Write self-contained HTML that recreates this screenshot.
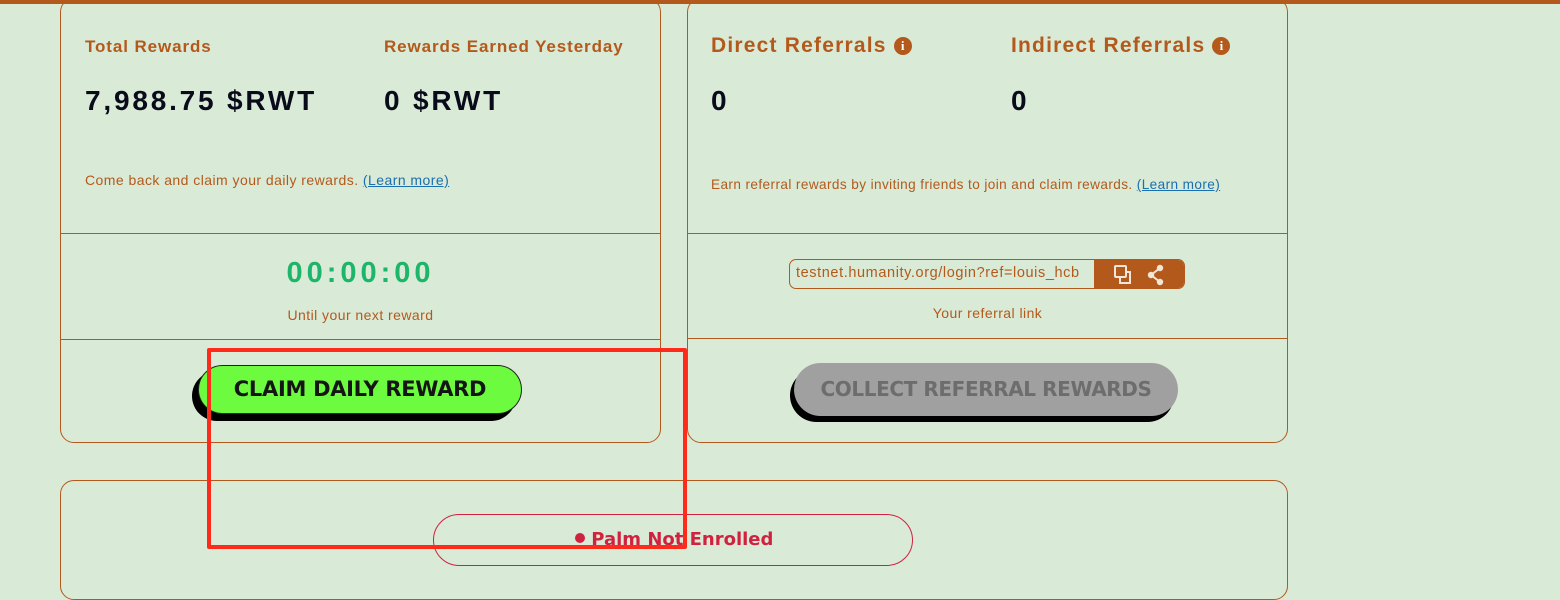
<!DOCTYPE html>
<html><head><meta charset="utf-8"><style>
*{margin:0;padding:0;box-sizing:border-box}
body{width:1560px;height:574px;background:#d9ead6;position:relative;overflow:hidden;font-family:"Liberation Sans",sans-serif}
.a{position:absolute;white-space:nowrap}
.card{position:absolute;border:1px solid #b4591c;border-radius:14px}
.hl{position:absolute;height:1px;background:#b4591c}
.lab{color:#b4591c;font-weight:bold;font-size:17px;letter-spacing:0.9px}
.big{color:#0a0b1a;font-weight:bold;font-size:28px;letter-spacing:2.8px}
.sm{color:#b4591c;font-size:14px;letter-spacing:0.45px}
.lnk{color:#1a6fb0;text-decoration:underline}
.info{display:inline-block;width:18px;height:18px;border-radius:50%;background:#b4591c;color:#fff;font-size:13px;text-align:center;line-height:18px;font-weight:bold;vertical-align:2px;font-family:"Liberation Serif",serif;letter-spacing:0}
</style></head><body>
<div class="a" style="left:0;top:0;width:1560px;height:4px;background:#b4591c"></div>
<div class="card" style="left:60px;top:-2px;width:601px;height:445px"></div>
<div class="card" style="left:687px;top:-2px;width:601px;height:445px"></div>
<div class="card" style="left:60px;top:480px;width:1228px;height:120px"></div>
<div class="hl" style="left:60px;top:233px;width:601px"></div>
<div class="hl" style="left:60px;top:339px;width:601px"></div>
<div class="hl" style="left:687px;top:233px;width:601px"></div>
<div class="hl" style="left:687px;top:338px;width:601px"></div>

<div class="a lab" style="left:85px;top:37px">Total Rewards</div>
<div class="a lab" style="left:384px;top:37px;letter-spacing:0.9px">Rewards Earned Yesterday</div>
<div class="a big" style="left:85px;top:85px">7,988.75 $RWT</div>
<div class="a big" style="left:384px;top:85px">0 $RWT</div>
<div class="a sm" style="left:85px;top:172px">Come back and claim your daily rewards. <span class="lnk">(Learn more)</span></div>
<div class="a" style="left:60px;width:601px;top:257px;text-align:center;color:#1db56a;font-weight:bold;font-size:29px;letter-spacing:4px">00:00:00</div>
<div class="a sm" style="left:60px;width:601px;top:307px;text-align:center">Until your next reward</div>

<div class="a" style="left:192px;top:371px;width:324px;height:50px;border-radius:25px;background:#000"></div>
<div class="a" style="left:198px;top:365px;width:324px;height:49px;border-radius:25px;background:#6cfb3e;border:1px solid #222;text-align:center;line-height:47px;font-weight:bold;font-size:21px;color:#151515;font-family:'DejaVu Sans','Liberation Sans',sans-serif;letter-spacing:-0.3px">CLAIM DAILY REWARD</div>

<div class="a" style="left:711px;top:34px;color:#b4591c;font-weight:bold;font-size:21px;letter-spacing:1.2px">Direct Referrals <span class="info">i</span></div>
<div class="a" style="left:1011px;top:34px;color:#b4591c;font-weight:bold;font-size:21px;letter-spacing:1.2px">Indirect Referrals <span class="info">i</span></div>
<div class="a big" style="left:711px;top:85px">0</div>
<div class="a big" style="left:1011px;top:85px">0</div>
<div class="a sm" style="left:711px;top:177px;font-size:13.6px;letter-spacing:0.4px">Earn referral rewards by inviting friends to join and claim rewards. <span class="lnk">(Learn more)</span></div>

<div class="a" style="left:789px;top:259px;width:396px;height:30px;border:1px solid #b4591c;border-radius:7px;overflow:hidden">
 <div class="a sm" style="left:6px;top:5px;font-size:14.5px;letter-spacing:0.6px">testnet.humanity.org/login?ref=louis_hcb</div>
 <div class="a" style="left:304px;top:0;width:92px;height:30px;background:#b4591c">
  <svg class="a" style="left:18px;top:4px" width="24" height="22" viewBox="0 0 24 22" fill="none" stroke="#f2e6d8" stroke-width="2"><rect x="3" y="2" width="11" height="11" rx="1"/><path d="M14 8h4v11H8v-6"/></svg>
  <svg class="a" style="left:52px;top:4px" width="20" height="22" viewBox="0 0 20 22" fill="#f2e6d8"><circle cx="14" cy="4" r="3.2"/><circle cx="14" cy="18" r="3.2"/><circle cx="5" cy="11" r="3.2"/><path d="M5 11L14 4M5 11L14 18" stroke="#f2e6d8" stroke-width="2"/></svg>
 </div>
</div>
<div class="a sm" style="left:687px;width:601px;top:305px;text-align:center">Your referral link</div>

<div class="a" style="left:790px;top:369px;width:384px;height:53px;border-radius:27px;background:#000"></div>
<div class="a" style="left:794px;top:363px;width:384px;height:53px;border-radius:27px;background:#a0a0a0;text-align:center;line-height:53px;font-weight:bold;font-size:20px;color:#6d6d6d;font-family:'DejaVu Sans','Liberation Sans',sans-serif;letter-spacing:-0.4px">COLLECT REFERRAL REWARDS</div>

<div class="a" style="left:433px;top:514px;width:480px;height:52px;border:1px solid #d0223f;border-radius:26px"></div>
<div class="a" style="left:575px;top:529px;color:#d0223f;font-weight:bold;font-size:18px;font-family:'DejaVu Sans','Liberation Sans',sans-serif"><span style="display:inline-block;width:10px;height:10px;border-radius:50%;background:#d0223f;vertical-align:2px"></span> Palm Not Enrolled</div>

<div class="a" style="left:207px;top:348px;width:480px;height:201px;border:4px solid #ff2a1a;border-radius:2px"></div>
</body></html>
